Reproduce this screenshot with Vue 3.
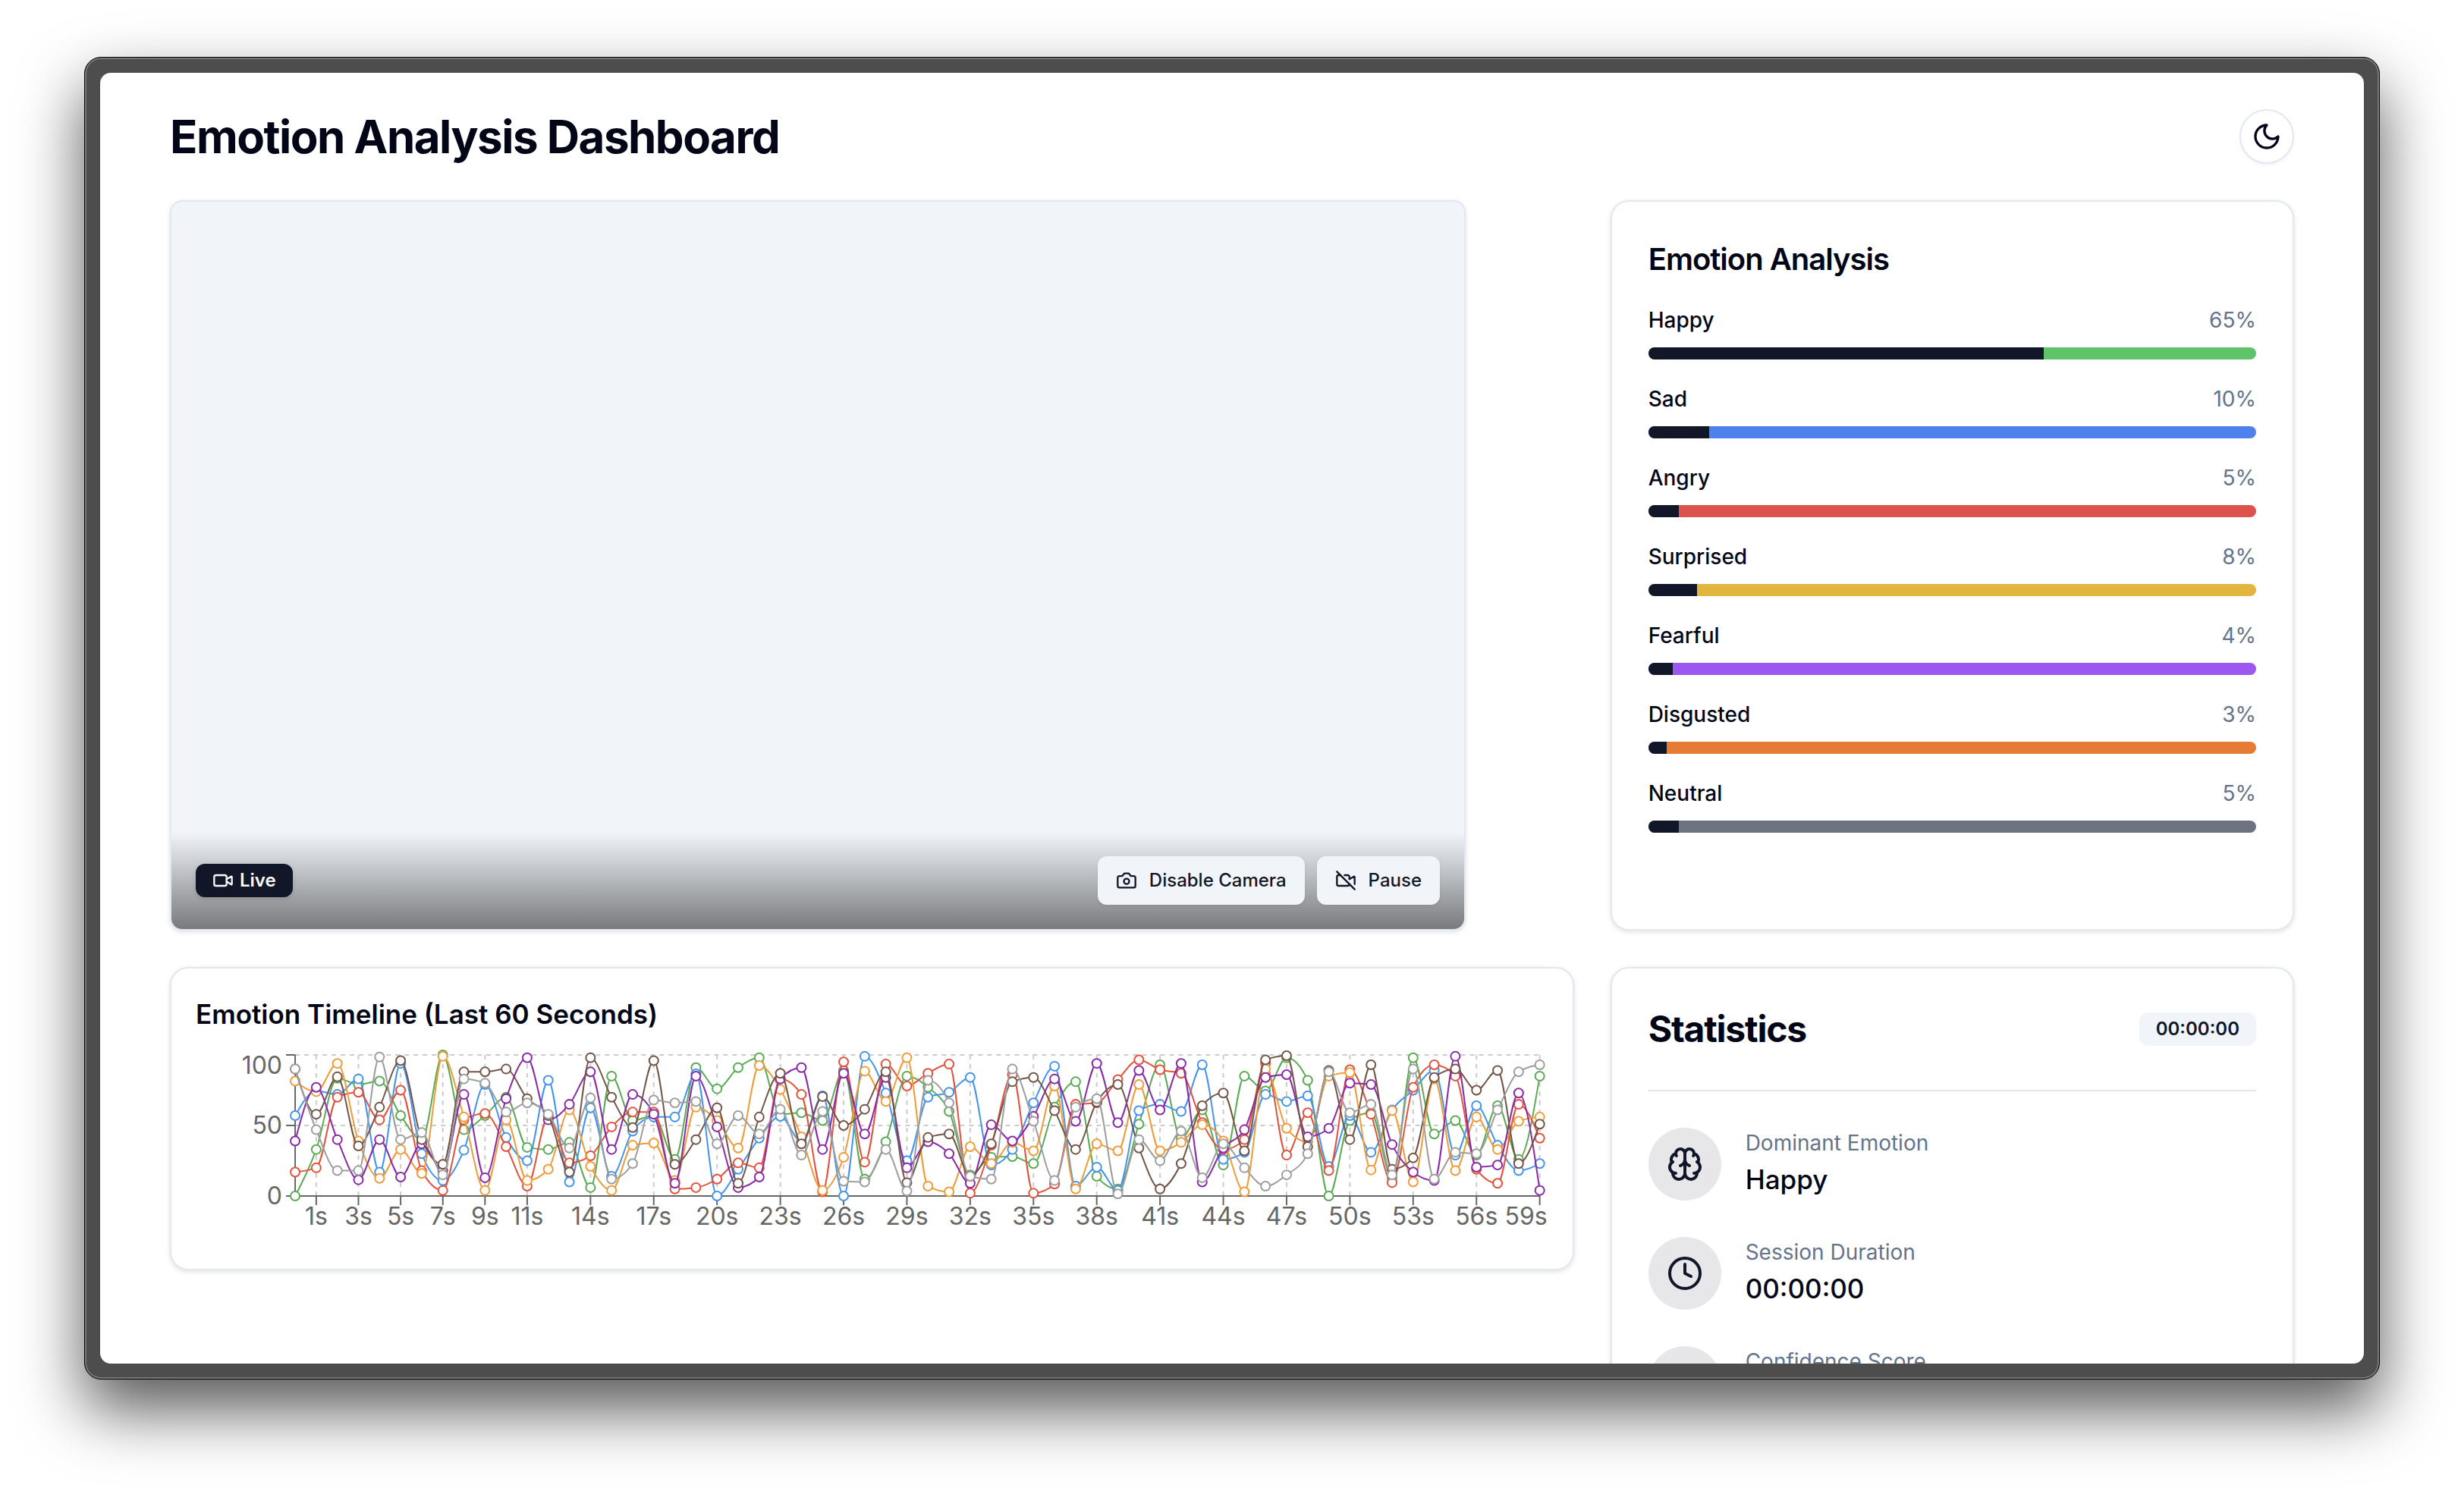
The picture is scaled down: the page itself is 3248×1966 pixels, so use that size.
<script setup>
const emotions = [
  { name: 'Happy', value: 65, color: '#5fc36a' },
  { name: 'Sad', value: 10, color: '#4e81ee' },
  { name: 'Angry', value: 5, color: '#dd524c' },
  { name: 'Surprised', value: 8, color: '#e1b53e' },
  { name: 'Fearful', value: 4, color: '#9b57ef' },
  { name: 'Disgusted', value: 3, color: '#e77b36' },
  { name: 'Neutral', value: 5, color: '#6c7280' },
]

const series = [
  { name: 'Happy', color: '#5bab55', data: [0, 33, 83.5, 79, 81.5, 57, 40, 100, 47, 57, 70, 34.5, 33, 38, 6, 85, 53.5, 57, 26, 91, 76, 91, 98, 58, 59, 53.5, 89, 12, 38.5, 85, 77, 60, 15, 27.5, 28, 23, 63, 81, 14, 5, 51, 93, 41, 61, 22, 85, 74.5, 98, 82, 0, 53.5, 59, 13, 98, 44, 53.5, 29, 64, 26, 85] },
  { name: 'Sad', color: '#4594ee', data: [57, 74.5, 72, 83, 17, 94, 30, 11, 32.5, 79, 41.5, 25, 82, 10, 62.5, 14, 46, 56, 56, 86.5, 0, 19, 41, 56.5, 38.5, 71, 0, 99, 73, 25, 70, 73.5, 84, 22, 33, 66, 92, 7, 20.5, 4, 60.5, 65, 60, 93, 26, 31, 72, 67, 71, 21, 57, 31, 61, 75, 89, 29, 64, 36, 18, 23] },
  { name: 'Angry', color: '#e4513d', data: [17, 20, 70, 73.5, 54, 75, 18, 4, 54, 58.5, 35, 7, 56.5, 23.5, 28.5, 49, 59.5, 59.5, 5, 6, 12, 23.5, 20, 83, 72, 3, 95, 24, 93.5, 78, 87, 93.5, 2, 36, 86, 2, 8.5, 65, 66, 82.5, 96.5, 89.5, 87, 52, 33, 40, 94, 29, 59, 18, 89.5, 58, 9.5, 77, 93, 85, 19, 9, 65, 41] },
  { name: 'Surprised', color: '#f19c38', data: [81.5, 74, 94, 39, 12.5, 33, 16, 99, 56, 4, 54, 11, 19, 61, 21, 4, 36, 37.5, 11, 63, 53.5, 34, 92.5, 75.5, 42, 4, 27.5, 88.5, 67, 98, 7, 3, 35, 23, 38, 32, 78, 5, 37, 32, 79, 32, 38, 50.5, 39, 3, 90, 48, 38.5, 85, 87.5, 18.5, 60.5, 10, 83, 18, 56, 33, 53, 56] },
  { name: 'Fearful', color: '#8a2aa9', data: [39, 77, 40, 11.5, 40, 13.5, 37, 18, 72, 13, 69, 98, 54, 65, 88, 33, 72, 58, 9, 85, 49, 6, 13.5, 83, 91, 33, 87, 44, 84, 20, 38.5, 30, 9, 50.5, 39, 56.5, 83, 53, 94, 52, 89, 61, 94, 10, 34, 47, 84, 86, 42, 48, 80, 79, 36.5, 17, 11, 99, 20.5, 22, 73, 4] },
  { name: 'Disgusted', color: '#735649', data: [90, 58, 84.5, 35.5, 63, 96, 40, 22.5, 88, 88, 90, 69, 57, 17, 98, 70, 48.5, 96, 22.5, 40, 62.5, 9, 56, 87, 37, 70.5, 50, 61.5, 88, 9.5, 41.5, 44, 14, 37, 81, 84, 60.5, 33, 66.5, 79, 34, 5, 23, 64, 73, 32, 96.5, 99.5, 35, 89, 40, 93, 19, 27, 84, 90, 75, 89, 23, 51] },
  { name: 'Neutral', color: '#9e9e9e', data: [90, 47, 18, 18, 98.5, 40, 45, 15, 83, 80, 59.5, 66, 58, 34, 69.5, 12, 23, 68, 66, 67, 37, 57, 44, 61.5, 29, 60, 10.5, 10, 33, 3.5, 82, 66, 14, 12, 90, 53, 11, 63, 69, 1.5, 40, 25, 46, 13, 37, 20, 7, 15, 30, 88, 59, 65, 15, 90, 12, 31, 30, 61, 88, 93] },
]

const plot = { left: 131, right: 1771, top: 10, bottom: 196 }
const x = (i) => plot.left + (i * (plot.right - plot.left)) / 59
const y = (v) => plot.bottom - (v * (plot.bottom - plot.top)) / 100
const seconds = [1, 3, 5, 7, 9, 11, 14, 17, 20, 23, 26, 29, 32, 35, 38, 41, 44, 47, 50, 53, 56, 59]
const labelX = (s) => (s === 59 ? x(s) - 18 : x(s))
const levels = [
  { value: 0, labelY: 207 },
  { value: 50, labelY: 114 },
  { value: 100, labelY: 35 },
]

// Monotone cubic interpolation: the curve never overshoots its samples.
function curve(data) {
  const px = data.map((_, i) => x(i))
  const py = data.map(y)
  const n = data.length
  const slope = (i) => (py[i + 1] - py[i]) / (px[i + 1] - px[i])
  const t = new Array(n)
  for (let i = 1; i < n - 1; i++) {
    const a = slope(i - 1)
    const b = slope(i)
    t[i] = (Math.sign(a) + Math.sign(b)) * Math.min(Math.abs(a), Math.abs(b), Math.abs(a + b) / 4)
  }
  t[0] = (3 * slope(0) - t[1]) / 2
  t[n - 1] = (3 * slope(n - 2) - t[n - 2]) / 2
  let d = `M${px[0]},${py[0]}`
  for (let i = 1; i < n; i++) {
    const h = (px[i] - px[i - 1]) / 3
    d += `C${px[i - 1] + h},${py[i - 1] + t[i - 1] * h} ${px[i] - h},${py[i] - t[i] * h} ${px[i]},${py[i]}`
  }
  return d
}
</script>

<template>
  <div class="stage">
    <div class="window">
      <div class="screen">
        <div class="container">
          <header class="header">
            <h1>Emotion Analysis Dashboard</h1>
            <button class="theme" type="button" aria-label="Toggle theme">
              <svg class="icon" viewBox="0 0 24 24"><path d="M12 3a6 6 0 0 0 9 9 9 9 0 1 1-9-9Z" /></svg>
            </button>
          </header>

          <main class="grid">
            <section class="video">
              <div class="overlay">
                <span class="badge live">
                  <svg class="icon" viewBox="0 0 24 24">
                    <path d="m16 13 5.223 3.482a.5.5 0 0 0 .777-.416V7.87a.5.5 0 0 0-.752-.432L16 10.500" />
                    <rect x="2" y="6" width="14" height="12" rx="2" />
                  </svg>
                  Live
                </span>
                <div class="controls">
                  <button class="control" type="button">
                    <svg class="icon" viewBox="0 0 24 24">
                      <path d="M14.500 4h-5L7 7H4a2 2 0 0 0-2 2v9a2 2 0 0 0 2 2h16a2 2 0 0 0 2-2V9a2 2 0 0 0-2-2h-3l-2.500-3z" />
                      <circle cx="12" cy="13" r="3" />
                    </svg>
                    Disable Camera
                  </button>
                  <button class="control" type="button">
                    <svg class="icon" viewBox="0 0 24 24">
                      <path d="M10.660 6H14a2 2 0 0 1 2 2v2.500l5.248-3.062A.5.5 0 0 1 22 7.870v8.196" />
                      <path d="M16 16a2 2 0 0 1-2 2H4a2 2 0 0 1-2-2V8a2 2 0 0 1 2-2h2" />
                      <path d="m2 2 20 20" />
                    </svg>
                    Pause
                  </button>
                </div>
              </div>
            </section>

            <section class="card analysis">
              <h2>Emotion Analysis</h2>
              <div v-for="e in emotions" :key="e.name" class="emotion">
                <div class="row">
                  <span class="name">{{ e.name }}</span>
                  <span class="percent">{{ e.value }}%</span>
                </div>
                <div class="track" :style="{ backgroundColor: e.color }">
                  <div class="fill" :style="{ width: e.value + '%' }"></div>
                </div>
              </div>
            </section>

            <section class="card timeline">
              <h2>Emotion Timeline (Last 60 Seconds)</h2>
              <svg class="chart" viewBox="0 0 1782 260">
                <g class="gridlines">
                  <line v-for="l in levels" :key="'h' + l.value" :x1="plot.left" :x2="plot.right" :y1="y(l.value)" :y2="y(l.value)" />
                  <line v-for="s in seconds" :key="'v' + s" :x1="x(s)" :x2="x(s)" :y1="plot.top" :y2="plot.bottom" />
                </g>
                <g class="axis">
                  <line :x1="plot.left" :x2="plot.right" :y1="plot.bottom" :y2="plot.bottom" />
                  <line :x1="plot.left" :x2="plot.left" :y1="plot.top" :y2="plot.bottom" />
                  <line v-for="l in levels" :key="'t' + l.value" :x1="plot.left - 12" :x2="plot.left" :y1="y(l.value)" :y2="y(l.value)" />
                  <line v-for="s in seconds" :key="'s' + s" :x1="x(s)" :x2="x(s)" :y1="plot.bottom" :y2="plot.bottom + 12" />
                </g>
                <g class="labels">
                  <text v-for="l in levels" :key="l.value" x="114" :y="l.labelY" text-anchor="end">{{ l.value }}</text>
                  <text v-for="s in seconds" :key="s" :x="labelX(s)" y="234" text-anchor="middle">{{ s }}s</text>
                </g>
                <g v-for="s in series" :key="s.name" class="series" :stroke="s.color">
                  <path :d="curve(s.data)" fill="none" />
                  <circle v-for="(v, i) in s.data" :key="i" :cx="x(i)" :cy="y(v)" r="6" fill="#fff" />
                </g>
              </svg>
            </section>

            <section class="card stats">
              <div class="stats-head">
                <h2>Statistics</h2>
                <span class="badge time">00:00:00</span>
              </div>
              <hr />
              <div class="stat">
                <div class="disc">
                  <svg class="icon" viewBox="0 0 24 24">
                    <path d="M12 5a3 3 0 1 0-5.997.125 4 4 0 0 0-2.526 5.770 4 4 0 0 0 .556 6.588A4 4 0 1 0 12 18Z" />
                    <path d="M12 5a3 3 0 1 1 5.997.125 4 4 0 0 1 2.526 5.770 4 4 0 0 1-.556 6.588A4 4 0 1 1 12 18Z" />
                    <path d="M15 13a4.500 4.500 0 0 1-3-4 4.500 4.500 0 0 1-3 4" />
                    <path d="M17.599 6.500a3 3 0 0 0 .399-1.375" />
                    <path d="M6.003 5.125A3 3 0 0 0 6.401 6.500" />
                    <path d="M3.477 10.896a4 4 0 0 1 .585-.396" />
                    <path d="M19.938 10.500a4 4 0 0 1 .585.396" />
                    <path d="M6 18a4 4 0 0 1-1.967-.516" />
                    <path d="M19.967 17.484A4 4 0 0 1 18 18" />
                  </svg>
                </div>
                <div>
                  <p class="label">Dominant Emotion</p>
                  <p class="value">Happy</p>
                </div>
              </div>
              <div class="stat">
                <div class="disc">
                  <svg class="icon" viewBox="0 0 24 24">
                    <circle cx="12" cy="12" r="10" />
                    <path d="M12 6v6l4 2" />
                  </svg>
                </div>
                <div>
                  <p class="label">Session Duration</p>
                  <p class="value">00:00:00</p>
                </div>
              </div>
              <div class="stat">
                <div class="disc"></div>
                <div>
                  <p class="label">Confidence Score</p>
                </div>
              </div>
            </section>
          </main>
        </div>
      </div>
    </div>
  </div>
</template>

<style>
body {
  background: #fff;
}
</style>

<style scoped>
* {
  box-sizing: border-box;
  margin: 0;
}
.stage {
  height: 100vh;
  padding: 75px 111px 147px;
  overflow: hidden;
  font-family: Inter, "Liberation Sans", sans-serif;
  color: #020617;
}
.window {
  height: 100%;
  padding: 20px;
  background: #4d4d4d;
  border: 1px solid #000;
  border-radius: 22px;
  box-shadow: inset 0 0 0 2px #777, 0 40px 84px rgba(0, 0, 0, 0.66);
}
.screen {
  height: 100%;
  padding: 48px 32px;
  overflow: hidden;
  background: #fff;
  border-radius: 14px;
}
.container {
  max-width: 2800px;
  margin: 0 auto;
}
.icon {
  flex: none;
  fill: none;
  stroke: currentColor;
  stroke-width: 2;
  stroke-linecap: round;
  stroke-linejoin: round;
}
.header {
  display: flex;
  align-items: center;
  justify-content: space-between;
  margin-bottom: 48px;
}
h1 {
  font-size: 60px;
  line-height: 72px;
  font-weight: 700;
  letter-spacing: -0.025em;
}
.theme {
  display: flex;
  align-items: center;
  justify-content: center;
  width: 72px;
  height: 72px;
  padding: 0;
  color: #020617;
  background: #fff;
  border: 2px solid #e2e8f0;
  border-radius: 50%;
  box-shadow: 0 2px 4px rgba(0, 0, 0, 0.05);
}
.theme .icon {
  width: 40px;
  height: 40px;
}
.grid {
  display: grid;
  grid-template-columns: repeat(12, minmax(0, 1fr));
  gap: 48px;
  align-items: start;
}
.video {
  grid-column: span 8;
  display: flex;
  flex-direction: column;
  justify-content: flex-end;
  width: 100%;
  max-width: 1708px;
  aspect-ratio: 1708 / 963;
  overflow: hidden;
  background: #f1f5fa;
  border: 2px solid #e2e8f0;
  border-radius: 16px;
  box-shadow: 0 2px 6px rgba(0, 0, 0, 0.12);
}
.overlay {
  display: flex;
  align-items: center;
  justify-content: space-between;
  padding: 32px;
  background: linear-gradient(to top, rgba(0, 0, 0, 0.5), rgba(0, 0, 0, 0));
}
.badge {
  display: flex;
  align-items: center;
  height: 44px;
  padding: 0 22px;
  font-size: 24px;
  line-height: 32px;
  font-weight: 600;
  border-radius: 12px;
}
.live {
  gap: 8px;
  color: #f8fafc;
  background: #111629;
  box-shadow: 0 2px 6px rgba(0, 0, 0, 0.12);
}
.badge .icon,
.control .icon {
  width: 28px;
  height: 28px;
}
.controls {
  display: flex;
  gap: 16px;
}
.control {
  display: flex;
  align-items: center;
  gap: 16px;
  height: 64px;
  padding: 0 24px;
  font-family: inherit;
  font-size: 24px;
  line-height: 32px;
  font-weight: 500;
  color: #111629;
  background: #f1f5fa;
  border: 0;
  border-radius: 12px;
  box-shadow: 0 2px 4px rgba(0, 0, 0, 0.05);
}
.card {
  background: #fff;
  border: 2px solid #e2e8f0;
  border-radius: 24px;
  box-shadow: 0 2px 6px rgba(0, 0, 0, 0.12);
}
.analysis {
  grid-column: span 4;
  align-self: stretch;
  display: flex;
  flex-direction: column;
  gap: 32px;
  padding: 48px;
}
.analysis h2 {
  font-size: 40px;
  line-height: 56px;
  font-weight: 600;
  letter-spacing: -0.025em;
}
.row {
  display: flex;
  justify-content: space-between;
  margin-bottom: 16px;
  font-size: 28px;
  line-height: 40px;
}
.name {
  font-weight: 500;
}
.percent {
  color: #64748b;
}
.track {
  height: 16px;
  overflow: hidden;
  border-radius: 8px;
}
.fill {
  height: 100%;
  background: #111629;
}
.timeline {
  grid-column: span 8;
  padding: 32px;
}
.timeline h2 {
  margin-bottom: 16px;
  font-size: 35px;
  line-height: 56px;
  font-weight: 600;
}
.chart {
  display: block;
  width: 100%;
  overflow: visible;
}
.gridlines line {
  stroke: #ccc;
  stroke-width: 2;
  stroke-dasharray: 6 6;
}
.axis line {
  stroke: #666;
  stroke-width: 2;
}
.labels {
  fill: #666;
  font-size: 32px;
}
.series {
  stroke-width: 2;
}
.stats {
  grid-column: span 4;
  padding: 48px;
}
.stats-head {
  display: flex;
  align-items: center;
  justify-content: space-between;
}
.stats h2 {
  font-size: 48px;
  line-height: 64px;
  font-weight: 700;
  letter-spacing: -0.025em;
}
.time {
  color: #111629;
  background: #f1f5fa;
}
hr {
  height: 2px;
  margin: 48px 0;
  background: #e2e8f0;
  border: 0;
}
.stat {
  display: flex;
  gap: 32px;
  margin-bottom: 48px;
}
.disc {
  display: flex;
  align-items: center;
  justify-content: center;
  width: 96px;
  height: 96px;
  color: #111629;
  background: #e7e7e9;
  border-radius: 50%;
}
.disc .icon {
  width: 48px;
  height: 48px;
}
.label {
  font-size: 28px;
  line-height: 40px;
  color: #64748b;
}
.value {
  font-size: 35px;
  line-height: 56px;
  font-weight: 500;
}
</style>
